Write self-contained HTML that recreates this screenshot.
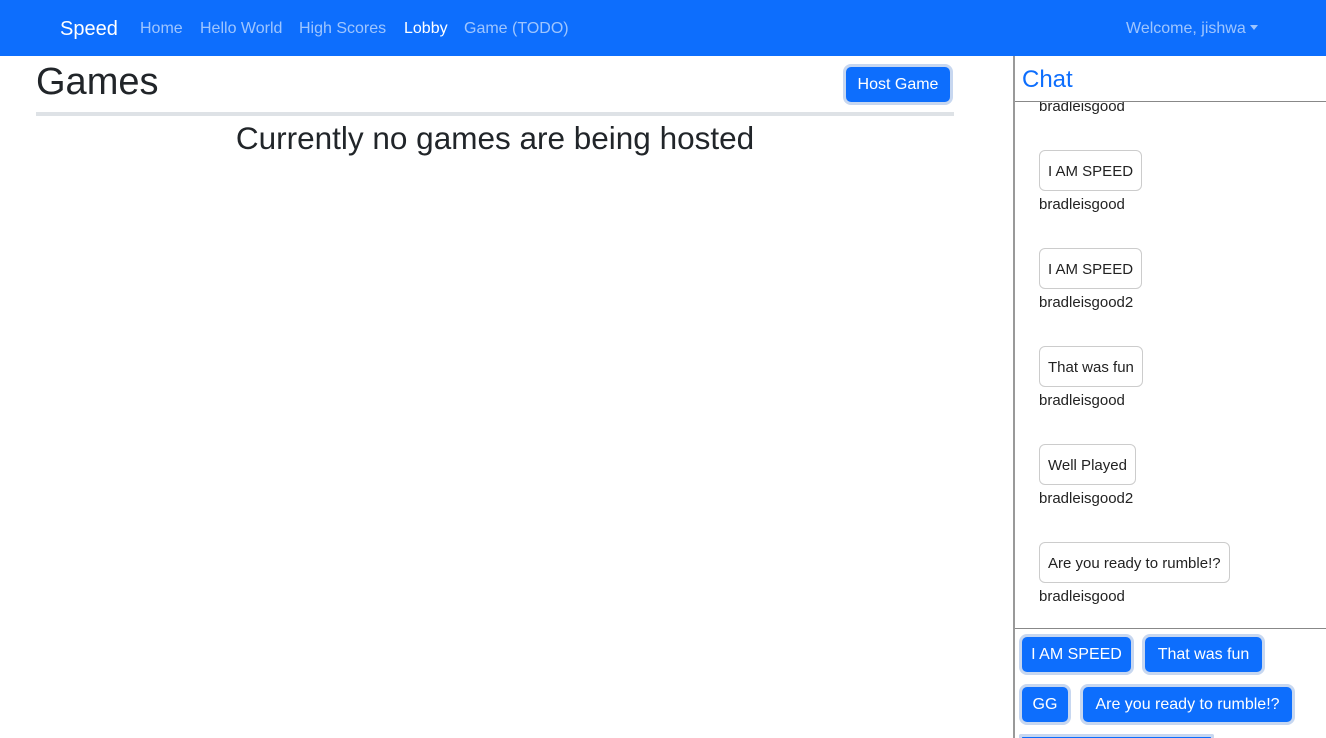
<!DOCTYPE html>
<html style="overflow:hidden;width:1326px;height:738px"><head><meta charset="utf-8"><style>
*{box-sizing:border-box;margin:0;padding:0}
body{width:1326px;height:738px;overflow:hidden;background:#fff;font-family:"Liberation Sans",sans-serif;position:relative;color:#212529}
.a{position:absolute;white-space:nowrap}
nav{position:absolute;left:0;top:0;width:1326px;height:56px;background:#0d6efd}
.nl{font-size:16px;color:rgba(255,255,255,.6);top:20px}
.btn{position:absolute;background:#0d6efd;color:#fff;font-size:16px;border-radius:5px;box-shadow:0 0 0 3px #c7d7f0;text-align:center;white-space:nowrap}
.msg{position:absolute;left:1039px;height:41px;border:1px solid #ccc;border-radius:6px;font-size:15px;padding:0 8px;line-height:41px;color:#222}
.un{position:absolute;left:1039px;font-size:15px;color:#222}
</style></head><body>
<nav>
<div class="a" style="left:60px;top:18px;font-size:20px;color:#fff">Speed</div>
<div class="a nl" style="left:140px">Home</div>
<div class="a nl" style="left:200px">Hello World</div>
<div class="a nl" style="left:299px">High Scores</div>
<div class="a nl" style="left:404px;color:#fff">Lobby</div>
<div class="a nl" style="left:464px">Game (TODO)</div>
<div class="a nl" style="left:1126px">Welcome, jishwa <span style="display:inline-block;border-left:4px solid transparent;border-right:4px solid transparent;border-top:5px solid rgba(255,255,255,.6);vertical-align:middle;margin-top:-2px"></span></div>
</nav>
<div class="a" style="left:36px;top:61px;font-size:38px;color:#212529">Games</div>
<div class="btn" style="left:846px;top:67px;width:104px;height:35px;line-height:35px">Host Game</div>
<div class="a" style="left:36px;top:112px;width:918px;height:4px;background:#dee2e6"></div>
<div class="a" style="left:0;width:990px;top:120px;text-align:center;font-size:31.5px">Currently no games are being hosted</div>
<div class="a" style="left:1013px;top:56px;width:2px;height:682px;background:#999"></div>
<div class="a" style="left:1022px;top:66px;font-size:24px;color:#0d6efd">Chat</div>
<div class="a" style="left:1015px;top:101px;width:311px;height:1px;background:#888"></div>
<div style="position:absolute;left:1015px;top:102px;width:311px;height:526px;overflow:hidden">
<div class="un" style="left:24px;top:-4px">bradleisgood</div>
</div>
<div class="msg" style="top:150px">I AM SPEED</div><div class="un" style="top:196px">bradleisgood</div>
<div class="msg" style="top:248px">I AM SPEED</div><div class="un" style="top:294px">bradleisgood2</div>
<div class="msg" style="top:346px">That was fun</div><div class="un" style="top:392px">bradleisgood</div>
<div class="msg" style="top:444px">Well Played</div><div class="un" style="top:490px">bradleisgood2</div>
<div class="msg" style="top:542px">Are you ready to rumble!?</div><div class="un" style="top:588px">bradleisgood</div>
<div class="a" style="left:1015px;top:628px;width:311px;height:1px;background:#888"></div>
<div class="btn" style="left:1022px;top:637px;width:109px;height:35px;line-height:35px">I AM SPEED</div>
<div class="btn" style="left:1145px;top:637px;width:117px;height:35px;line-height:35px">That was fun</div>
<div class="btn" style="left:1022px;top:687px;width:46px;height:35px;line-height:35px">GG</div>
<div class="btn" style="left:1083px;top:687px;width:209px;height:35px;line-height:35px">Are you ready to rumble!?</div>
<div class="btn" style="left:1022px;top:737px;width:189px;height:1px"></div>
</body></html>
